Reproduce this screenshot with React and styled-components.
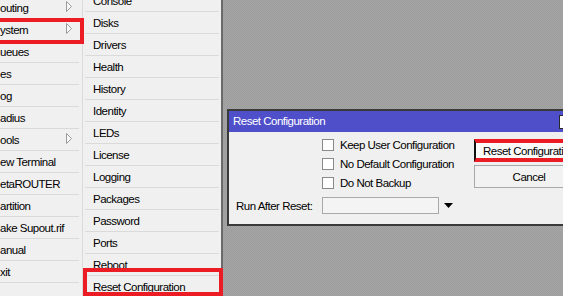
import React from 'react';
import styled, { createGlobalStyle, css } from 'styled-components';

const GlobalStyle = createGlobalStyle`
  html, body {
    margin: 0;
    padding: 0;
  }
  body {
    font-family: "Liberation Sans", Arial, sans-serif;
    font-size: 11.5px;
    letter-spacing: -0.5px;
    color: #000;
  }
`;

const RED = '#ec1c24';

const Screen = styled.div`
  display: flex;
  width: 563px;
  height: 296px;
  overflow: hidden;
  background: #f0f0f0;
`;

const marked = css`
  &::after {
    content: '';
    position: absolute;
    border: 4px solid ${RED};
    pointer-events: none;
    z-index: 2;
  }
`;

const LeftMenu = styled.div`
  width: 82px;
  flex-shrink: 0;
  border-right: 1px solid #dadada;
  display: flex;
  flex-direction: column;
  margin-top: -3px;
`;

const LeftItem = styled.div`
  position: relative;
  height: 22px;
  flex-shrink: 0;
  display: flex;
  align-items: center;
  justify-content: space-between;
  padding-bottom: 1px;
  box-sizing: border-box;
  white-space: nowrap;
  background: linear-gradient(#dadada, #dadada) no-repeat 0 100% / calc(100% - 3px) 1px;

  ${(p) =>
    p.$marked &&
    css`
      ${marked}
      &::after {
        top: -1px;
        bottom: -3px;
        left: -8px;
        right: -2px;
      }
    `}
`;

const Arrow = styled.svg`
  width: 6px;
  height: 11px;
  margin-right: 10px;
  margin-top: -3px;
  flex-shrink: 0;
`;

const SubMenu = styled.div`
  width: 138px;
  flex-shrink: 0;
  border-right: 2px solid #6a6a6a;
  display: flex;
  flex-direction: column;
  margin-top: -10px;
`;

const SubItem = styled.div`
  position: relative;
  height: 22px;
  flex-shrink: 0;
  display: flex;
  align-items: center;
  padding: 0 0 1px 10px;
  box-sizing: border-box;
  white-space: nowrap;
  background: linear-gradient(#dadada, #dadada) no-repeat 2px 100% / calc(100% - 4px) 1px;

  ${(p) =>
    p.$marked &&
    css`
      ${marked}
      &::after {
        top: -8px;
        bottom: 2px;
        left: 0;
        right: -2px;
      }
    `}
`;

const Desktop = styled.div`
  flex: 1;
  min-width: 0;
  padding: 109px 0 0 4px;
  background: repeating-conic-gradient(#9b9b9b 0 25%, #a7a7a7 0 50%) 0 0 / 2px 2px;
`;

const Dialog = styled.div`
  width: 360px;
  border: 2px solid #3a3a3a;
  background: #f0f0f0;
  box-sizing: border-box;
`;

const TitleBar = styled.div`
  height: 21px;
  background: #4f4fca;
  color: #fff;
  display: flex;
  align-items: center;
  padding-left: 4px;
`;

const Title = styled.span`
  flex: 1;
  margin-top: -1px;
`;

const CloseBox = styled.span`
  width: 11px;
  height: 12px;
  background: #fff;
  border: 1px solid #2a2a2a;
  margin-right: 13px;
`;

const Body = styled.div`
  display: flex;
  padding-top: 7px;
  height: 92px;
  box-sizing: border-box;
`;

const Main = styled.div`
  width: 245px;
  flex-shrink: 0;
  display: flex;
  flex-direction: column;
`;

const Options = styled.div`
  display: flex;
  flex-direction: column;
  gap: 7px;
  padding-left: 93px;
`;

const Option = styled.label`
  display: flex;
  align-items: center;
  gap: 6px;
  height: 12px;
  line-height: 12px;
  white-space: nowrap;
`;

const Box = styled.span`
  width: 10px;
  height: 10px;
  background: #fff;
  border: 1px solid #8a8a8a;
  flex-shrink: 0;
`;

const RunRow = styled.div`
  display: flex;
  align-items: center;
  margin-top: 8px;
  padding-left: 7px;
`;

const RunLabel = styled.span`
  width: 86px;
  white-space: nowrap;
`;

const Select = styled.div`
  width: 115px;
  height: 15px;
  background: #f4f4f4;
  border: 1px solid #a9a9a9;
`;

const DropArrow = styled.svg`
  width: 9px;
  height: 5px;
  margin-left: 5px;
  margin-top: -1px;
`;

const Buttons = styled.div`
  display: flex;
  flex-direction: column;
  gap: 3px;
  width: 110px;
  flex-shrink: 0;
`;

const Button = styled.div`
  height: 23px;
  box-sizing: border-box;
  display: flex;
  align-items: center;
  white-space: nowrap;
  overflow: hidden;
  border: 1px solid #a8a8a8;
  background: #f2f2f2;
  justify-content: center;

  ${(p) =>
    p.$primary &&
    css`
      border: 4px solid ${RED};
      border-left: 2px solid #111;
      background: #fbfbfb;
      justify-content: flex-start;
      padding-left: 7px;
    `}
`;

const leftItems = [
  { label: 'outing', sub: true },
  { label: 'ystem', sub: true, marked: true },
  { label: 'ueues' },
  { label: 'es' },
  { label: 'og' },
  { label: 'adius' },
  { label: 'ools', sub: true },
  { label: 'ew Terminal' },
  { label: 'etaROUTER' },
  { label: 'artition' },
  { label: 'ake Supout.rif' },
  { label: 'anual' },
  { label: 'xit' },
  { label: '' },
];

const subItems = [
  'Console',
  'Disks',
  'Drivers',
  'Health',
  'History',
  'Identity',
  'LEDs',
  'License',
  'Logging',
  'Packages',
  'Password',
  'Ports',
  'Reboot',
  'Reset Configuration',
];

const options = ['Keep User Configuration', 'No Default Configuration', 'Do Not Backup'];

const SubArrow = () => (
  <Arrow viewBox="0 0 6 11">
    <path d="M0.5 0.5 V10.5 L5.5 5.5 Z" fill="#f7f7f7" stroke="#9a9a9a" strokeWidth="1" />
  </Arrow>
);

export default function App() {
  return (
    <>
      <GlobalStyle />
      <Screen>
        <LeftMenu>
          {leftItems.map((item, i) => (
            <LeftItem key={i} $marked={item.marked}>
              <span>{item.label}</span>
              {item.sub && <SubArrow />}
            </LeftItem>
          ))}
        </LeftMenu>

        <SubMenu>
          {subItems.map((name) => (
            <SubItem key={name} $marked={name === 'Reset Configuration'}>
              {name}
            </SubItem>
          ))}
        </SubMenu>

        <Desktop>
          <Dialog>
            <TitleBar>
              <Title>Reset Configuration</Title>
              <CloseBox />
            </TitleBar>
            <Body>
              <Main>
                <Options>
                  {options.map((o) => (
                    <Option key={o}>
                      <Box />
                      {o}
                    </Option>
                  ))}
                </Options>
                <RunRow>
                  <RunLabel>Run After Reset:</RunLabel>
                  <Select />
                  <DropArrow viewBox="0 0 9 5">
                    <path d="M0 0 H9 L4.5 5 Z" fill="#000" />
                  </DropArrow>
                </RunRow>
              </Main>
              <Buttons>
                <Button $primary>Reset Configuration</Button>
                <Button>Cancel</Button>
              </Buttons>
            </Body>
          </Dialog>
        </Desktop>
      </Screen>
    </>
  );
}
